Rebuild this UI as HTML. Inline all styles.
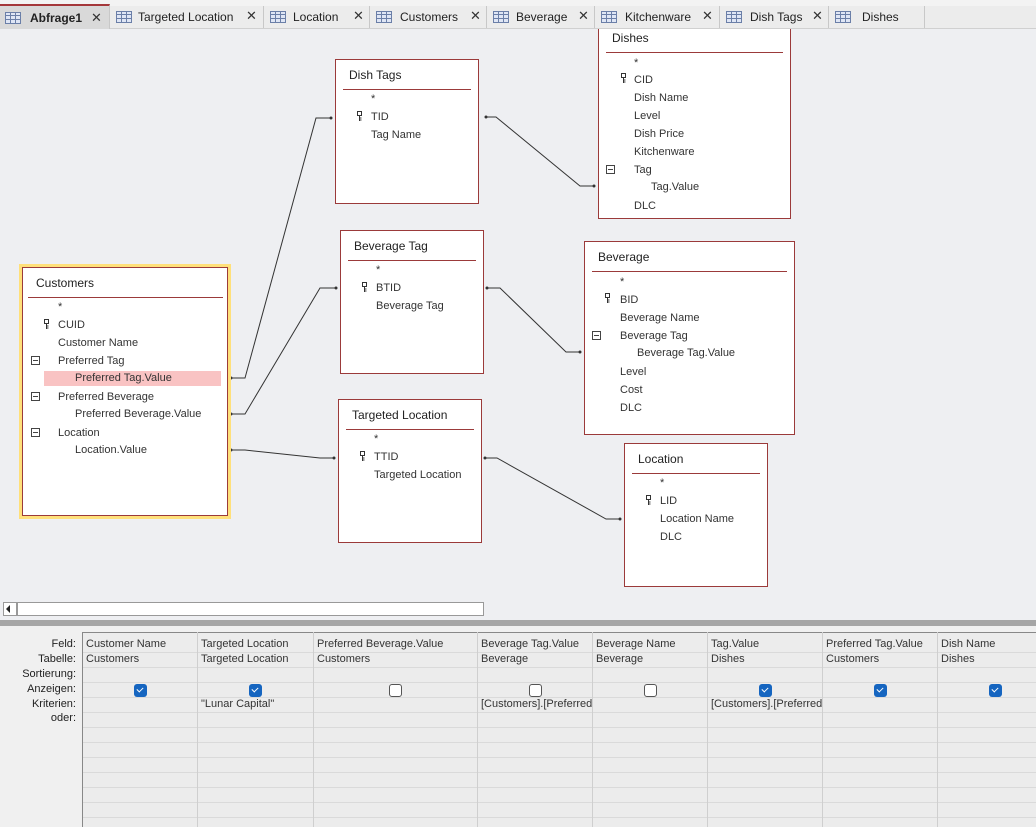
<!DOCTYPE html>
<html><head><meta charset="utf-8"><style>
*{margin:0;padding:0;box-sizing:border-box}
body{width:1036px;height:827px;overflow:hidden;background:#eeeff2;font-family:"Liberation Sans",Arial,sans-serif;font-size:11px;color:#333;position:relative}
.a{position:absolute;white-space:nowrap;line-height:14px}
.tb{position:absolute;background:#fff;border:1px solid #9b3a3a}
.tt{position:absolute;left:13px;font-size:12px;color:#222;line-height:14px}
.hl{position:absolute;left:7px;right:7px;height:1px;background:#9b3a3a}
.k{position:absolute;width:6px;height:11px}
.m{position:absolute;width:9px;height:9px;border:1px solid #444}
.m:after{content:"";position:absolute;left:1px;top:3px;width:5px;height:1px;background:#444}
.tab{position:absolute;top:6px;height:22px;border-right:1px solid #c8c8c8;font-size:12px;color:#222}
.tab span{position:absolute;top:4px}
.tab .x{font-size:13px;top:2px;color:#333}
.ti{position:absolute;left:6px;top:5px;width:16px;height:12px;border:1px solid #6b7fa8;background:repeating-linear-gradient(90deg,transparent 0 4px,#6b7fa8 4px 5px),repeating-linear-gradient(0deg,#dfe6f5 0 3px,#6b7fa8 3px 4px)}
.lbl{position:absolute;right:960px;line-height:15px;text-align:right;color:#222}
.cb{position:absolute;width:13px;height:13px;border-radius:3px;background:#1565c0}
.cb:after{content:"";position:absolute;left:3px;top:3px;width:5px;height:3px;border-left:1px solid #fff;border-bottom:1px solid #fff;transform:rotate(-45deg)}
.cu{position:absolute;width:13px;height:13px;border-radius:3px;border:1px solid #555;background:#fff}
.g{position:absolute;line-height:15px;color:#333;overflow:hidden;white-space:nowrap}
</style></head><body>
<div style="position:absolute;left:0;top:0;width:1036px;height:6px;background:#f3f3f3"></div>
<div style="position:absolute;left:0;top:6px;width:1036px;height:23px;background:#ececec;border-bottom:1px solid #d0d0d0"></div>
<div class="tab" style="left:0;width:110px;background:#d9d9d9;border-top:2px solid #a4373a;top:4px;height:25px"><div class="ti" style="left:5px;top:6px"></div><span style="left:30px;top:5px;font-weight:bold">Abfrage1</span><span class="x" style="left:91px;top:4px">✕</span></div>
<div class="tab" style="left:110px;width:154px"><div class="ti"></div><span style="left:28px">Targeted Location</span><span class="x" style="left:136px">✕</span></div>
<div class="tab" style="left:264px;width:106px"><div class="ti"></div><span style="left:29px">Location</span><span class="x" style="left:89px">✕</span></div>
<div class="tab" style="left:370px;width:117px"><div class="ti"></div><span style="left:30px">Customers</span><span class="x" style="left:100px">✕</span></div>
<div class="tab" style="left:487px;width:108px"><div class="ti"></div><span style="left:29px">Beverage</span><span class="x" style="left:91px">✕</span></div>
<div class="tab" style="left:595px;width:125px"><div class="ti"></div><span style="left:30px">Kitchenware</span><span class="x" style="left:107px">✕</span></div>
<div class="tab" style="left:720px;width:109px"><div class="ti"></div><span style="left:30px">Dish Tags</span><span class="x" style="left:92px">✕</span></div>
<div class="tab" style="left:829px;width:96px"><div class="ti"></div><span style="left:33px">Dishes</span></div>

<svg style="position:absolute;left:0;top:0" width="1036" height="600">
<g stroke="#333" stroke-width="1" fill="none">
<polyline points="231,378 245,378 316,118 331,118"/>
<polyline points="486,117 496,117 580,186 594,186"/>
<polyline points="231,414 245,414 320,288 336,288"/>
<polyline points="487,288 500,288 566,352 580,352"/>
<polyline points="231,450 245,450 320,458 334,458"/>
<polyline points="485,458 497,458 606,519 620,519"/>
</g>
<g fill="#333">
<circle cx="231" cy="378" r="1.5"/><circle cx="331" cy="118" r="1.5"/><circle cx="486" cy="117" r="1.5"/><circle cx="594" cy="186" r="1.5"/>
<circle cx="231" cy="414" r="1.5"/><circle cx="336" cy="288" r="1.5"/><circle cx="487" cy="288" r="1.5"/><circle cx="580" cy="352" r="1.5"/>
<circle cx="231" cy="450" r="1.5"/><circle cx="334" cy="458" r="1.5"/><circle cx="485" cy="458" r="1.5"/><circle cx="620" cy="519" r="1.5"/>
</g></svg>

<div class="tb" style="left:598px;top:29px;width:193px;height:190px;border-top:none">
<div class="tt" style="top:2px">Dishes</div><div class="hl" style="top:23px"></div>
<div class="a" style="left:35px;top:27px">*</div>
<svg class="k" style="left:22px;top:44px" viewBox="0 0 6 11"><rect x="0.5" y="0.5" width="4" height="4" fill="none" stroke="#333"/><path d="M2.5 4v6M2.5 7h2M2.5 9h2" stroke="#333"/></svg>
<div class="a" style="left:35px;top:44px">CID</div>
<div class="a" style="left:35px;top:62px">Dish Name</div>
<div class="a" style="left:35px;top:80px">Level</div>
<div class="a" style="left:35px;top:98px">Dish Price</div>
<div class="a" style="left:35px;top:116px">Kitchenware</div>
<div class="m" style="left:7px;top:136px"></div><div class="a" style="left:35px;top:134px">Tag</div>
<div class="a" style="left:52px;top:151px">Tag.Value</div>
<div class="a" style="left:35px;top:170px">DLC</div>
</div>

<div class="tb" style="left:335px;top:59px;width:144px;height:145px">
<div class="tt" style="top:8px">Dish Tags</div><div class="hl" style="top:29px"></div>
<div class="a" style="left:35px;top:32px">*</div>
<svg class="k" style="left:21px;top:51px" viewBox="0 0 6 11"><rect x="0.5" y="0.5" width="4" height="4" fill="none" stroke="#333"/><path d="M2.5 4v6M2.5 7h2M2.5 9h2" stroke="#333"/></svg>
<div class="a" style="left:35px;top:50px">TID</div>
<div class="a" style="left:35px;top:68px">Tag Name</div>
</div>

<div class="tb" style="left:340px;top:230px;width:144px;height:144px">
<div class="tt" style="top:8px">Beverage Tag</div><div class="hl" style="top:29px"></div>
<div class="a" style="left:35px;top:32px">*</div>
<svg class="k" style="left:21px;top:51px" viewBox="0 0 6 11"><rect x="0.5" y="0.5" width="4" height="4" fill="none" stroke="#333"/><path d="M2.5 4v6M2.5 7h2M2.5 9h2" stroke="#333"/></svg>
<div class="a" style="left:35px;top:50px">BTID</div>
<div class="a" style="left:35px;top:68px">Beverage Tag</div>
</div>

<div class="tb" style="left:584px;top:241px;width:211px;height:194px">
<div class="tt" style="top:8px">Beverage</div><div class="hl" style="top:29px"></div>
<div class="a" style="left:35px;top:33px">*</div>
<svg class="k" style="left:20px;top:51px" viewBox="0 0 6 11"><rect x="0.5" y="0.5" width="4" height="4" fill="none" stroke="#333"/><path d="M2.5 4v6M2.5 7h2M2.5 9h2" stroke="#333"/></svg>
<div class="a" style="left:35px;top:51px">BID</div>
<div class="a" style="left:35px;top:69px">Beverage Name</div>
<div class="m" style="left:7px;top:89px"></div><div class="a" style="left:35px;top:87px">Beverage Tag</div>
<div class="a" style="left:52px;top:104px">Beverage Tag.Value</div>
<div class="a" style="left:35px;top:123px">Level</div>
<div class="a" style="left:35px;top:141px">Cost</div>
<div class="a" style="left:35px;top:159px">DLC</div>
</div>

<div style="position:absolute;left:19px;top:264px;width:212px;height:255px;border:3px solid #ffe07a"></div>
<div class="tb" style="left:22px;top:267px;width:206px;height:249px">
<div class="tt" style="top:8px">Customers</div><div class="hl" style="top:29px;left:5px;right:4px"></div>
<div class="a" style="left:35px;top:32px">*</div>
<svg class="k" style="left:21px;top:51px" viewBox="0 0 6 11"><rect x="0.5" y="0.5" width="4" height="4" fill="none" stroke="#333"/><path d="M2.5 4v6M2.5 7h2M2.5 9h2" stroke="#333"/></svg>
<div class="a" style="left:35px;top:50px">CUID</div>
<div class="a" style="left:35px;top:68px">Customer Name</div>
<div class="m" style="left:8px;top:88px"></div><div class="a" style="left:35px;top:86px">Preferred Tag</div>
<div style="position:absolute;left:21px;top:103px;width:177px;height:15px;background:#f9c3c3"></div>
<div class="a" style="left:52px;top:103px">Preferred Tag.Value</div>
<div class="m" style="left:8px;top:124px"></div><div class="a" style="left:35px;top:122px">Preferred Beverage</div>
<div class="a" style="left:52px;top:139px">Preferred Beverage.Value</div>
<div class="m" style="left:8px;top:160px"></div><div class="a" style="left:35px;top:158px">Location</div>
<div class="a" style="left:52px;top:175px">Location.Value</div>
</div>

<div class="tb" style="left:338px;top:399px;width:144px;height:144px">
<div class="tt" style="top:8px">Targeted Location</div><div class="hl" style="top:29px"></div>
<div class="a" style="left:35px;top:32px">*</div>
<svg class="k" style="left:21px;top:51px" viewBox="0 0 6 11"><rect x="0.5" y="0.5" width="4" height="4" fill="none" stroke="#333"/><path d="M2.5 4v6M2.5 7h2M2.5 9h2" stroke="#333"/></svg>
<div class="a" style="left:35px;top:50px">TTID</div>
<div class="a" style="left:35px;top:68px">Targeted Location</div>
</div>

<div class="tb" style="left:624px;top:443px;width:144px;height:144px">
<div class="tt" style="top:8px">Location</div><div class="hl" style="top:29px"></div>
<div class="a" style="left:35px;top:32px">*</div>
<svg class="k" style="left:21px;top:51px" viewBox="0 0 6 11"><rect x="0.5" y="0.5" width="4" height="4" fill="none" stroke="#333"/><path d="M2.5 4v6M2.5 7h2M2.5 9h2" stroke="#333"/></svg>
<div class="a" style="left:35px;top:50px">LID</div>
<div class="a" style="left:35px;top:68px">Location Name</div>
<div class="a" style="left:35px;top:86px">DLC</div>
</div>

<div style="position:absolute;left:3px;top:602px;width:14px;height:14px;background:#fff;border:1px solid #999"></div>
<div style="position:absolute;left:6px;top:605px;width:0;height:0;border-top:4px solid transparent;border-bottom:4px solid transparent;border-right:4px solid #222"></div>
<div style="position:absolute;left:17px;top:602px;width:467px;height:14px;background:#fff;border:1px solid #999"></div>
<div style="position:absolute;left:0;top:620px;width:1036px;height:6px;background:#a6a6a6"></div>
<div style="position:absolute;left:0;top:626px;width:1036px;height:201px;background:#f0f0f0"></div>

<div style="position:absolute;left:82px;top:632px;width:954px;height:195px;border-top:1px solid #888;border-left:1px solid #888;background:#ececec repeating-linear-gradient(180deg,transparent 0 14px,#dadada 14px 15px);background-position:0 5px"></div>
<div style="position:absolute;left:197px;top:632px;width:1px;height:195px;background:#cfcfcf"></div>
<div style="position:absolute;left:313px;top:632px;width:1px;height:195px;background:#cfcfcf"></div>
<div style="position:absolute;left:477px;top:632px;width:1px;height:195px;background:#cfcfcf"></div>
<div style="position:absolute;left:592px;top:632px;width:1px;height:195px;background:#cfcfcf"></div>
<div style="position:absolute;left:707px;top:632px;width:1px;height:195px;background:#cfcfcf"></div>
<div style="position:absolute;left:822px;top:632px;width:1px;height:195px;background:#cfcfcf"></div>
<div style="position:absolute;left:937px;top:632px;width:1px;height:195px;background:#cfcfcf"></div>

<div class="lbl" style="top:637px">Feld:</div>
<div class="lbl" style="top:652px">Tabelle:</div>
<div class="lbl" style="top:667px">Sortierung:</div>
<div class="lbl" style="top:682px">Anzeigen:</div>
<div class="lbl" style="top:697px">Kriterien:</div>
<div class="lbl" style="top:711px">oder:</div>

<div class="g" style="left:86px;top:637px">Customer Name</div><div class="g" style="left:86px;top:652px">Customers</div>
<div class="g" style="left:201px;top:637px">Targeted Location</div><div class="g" style="left:201px;top:652px">Targeted Location</div><div class="g" style="left:201px;top:697px">"Lunar Capital"</div>
<div class="g" style="left:317px;top:637px">Preferred Beverage.Value</div><div class="g" style="left:317px;top:652px">Customers</div>
<div class="g" style="left:481px;top:637px">Beverage Tag.Value</div><div class="g" style="left:481px;top:652px">Beverage</div><div class="g" style="left:481px;top:697px;width:111px">[Customers].[Preferred</div>
<div class="g" style="left:596px;top:637px">Beverage Name</div><div class="g" style="left:596px;top:652px">Beverage</div>
<div class="g" style="left:711px;top:637px">Tag.Value</div><div class="g" style="left:711px;top:652px">Dishes</div><div class="g" style="left:711px;top:697px;width:111px">[Customers].[Preferred</div>
<div class="g" style="left:826px;top:637px">Preferred Tag.Value</div><div class="g" style="left:826px;top:652px">Customers</div>
<div class="g" style="left:941px;top:637px">Dish Name</div><div class="g" style="left:941px;top:652px">Dishes</div>

<div class="cb" style="left:134px;top:684px"></div>
<div class="cb" style="left:249px;top:684px"></div>
<div class="cu" style="left:389px;top:684px"></div>
<div class="cu" style="left:529px;top:684px"></div>
<div class="cu" style="left:644px;top:684px"></div>
<div class="cb" style="left:759px;top:684px"></div>
<div class="cb" style="left:874px;top:684px"></div>
<div class="cb" style="left:989px;top:684px"></div>
</body></html>
